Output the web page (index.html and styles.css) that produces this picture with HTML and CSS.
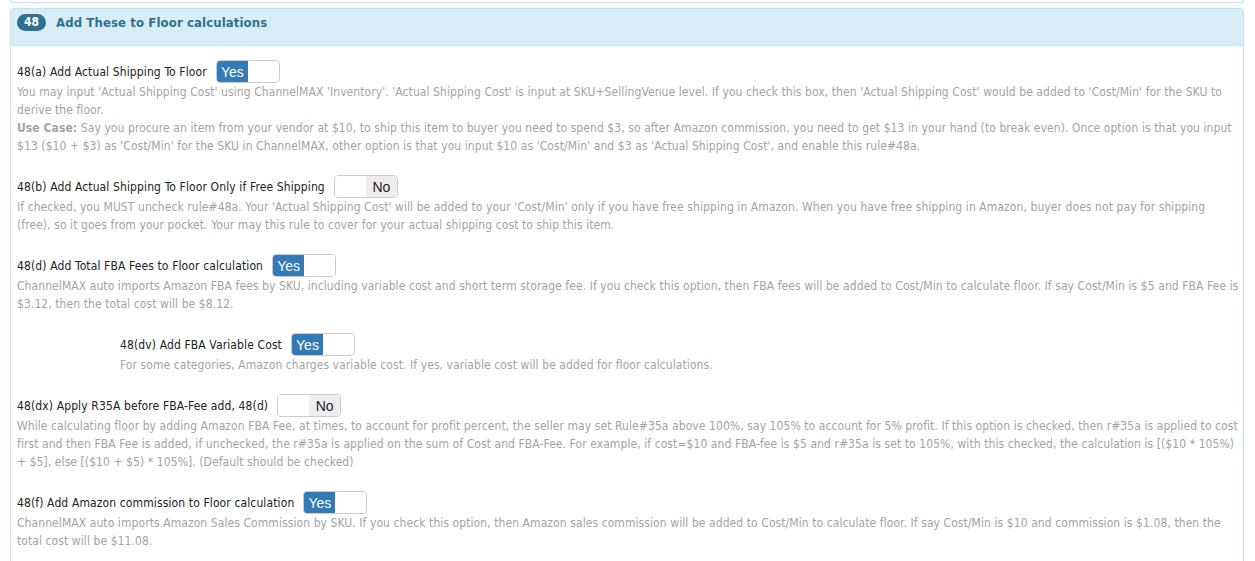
FILE: index.html
```html
<!DOCTYPE html>
<html>
<head>
<meta charset="utf-8">
<link rel="stylesheet" href="styles.css">
</head>
<body>
<div class="page">
  <div class="prev-panel"></div>
  <div class="panel">
    <div class="panel-heading">
      <span class="badge">48</span>
      <span class="panel-title">Add These to Floor calculations</span>
    </div>
    <div class="panel-body">
      <div class="rule">
        <div class="rule-head"><span class="label">48(a) Add Actual Shipping To Floor</span><span class="toggle on"><span class="t-on">Yes</span><span class="t-off"></span></span></div>
        <div class="desc">
          <p>You may input 'Actual Shipping Cost' using ChannelMAX 'Inventory'. 'Actual Shipping Cost' is input at SKU+SellingVenue level. If you check this box, then 'Actual Shipping Cost' would be added to 'Cost/Min' for the SKU to derive the floor.</p>
          <p><b>Use Case:</b> Say you procure an item from your vendor at $10, to ship this item to buyer you need to spend $3, so after Amazon commission, you need to get $13 in your hand (to break even). Once option is that you input $13 ($10 + $3) as 'Cost/Min' for the SKU in ChannelMAX, other option is that you input $10 as 'Cost/Min' and $3 as 'Actual Shipping Cost', and enable this rule#48a.</p>
        </div>
      </div>
      <div class="rule">
        <div class="rule-head"><span class="label">48(b) Add Actual Shipping To Floor Only if Free Shipping</span><span class="toggle off"><span class="t-on"></span><span class="t-off">No</span></span></div>
        <div class="desc">
          <p>If checked, you MUST uncheck rule#48a. Your 'Actual Shipping Cost' will be added to your 'Cost/Min' only if you have free shipping in Amazon. When you have free shipping in Amazon, buyer does not pay for shipping (free), so it goes from your pocket. Your may this rule to cover for your actual shipping cost to ship this item.</p>
        </div>
      </div>
      <div class="rule">
        <div class="rule-head"><span class="label">48(d) Add Total FBA Fees to Floor calculation</span><span class="toggle on"><span class="t-on">Yes</span><span class="t-off"></span></span></div>
        <div class="desc">
          <p>ChannelMAX auto imports Amazon FBA fees by SKU, including variable cost and short term storage fee. If you check this option, then FBA fees will be added to Cost/Min to calculate floor. If say Cost/Min is $5 and FBA Fee is $3.12, then the total cost will be $8.12.</p>
        </div>
      </div>
      <div class="rule sub">
        <div class="rule-head"><span class="label">48(dv) Add FBA Variable Cost</span><span class="toggle on"><span class="t-on">Yes</span><span class="t-off"></span></span></div>
        <div class="desc">
          <p>For some categories, Amazon charges variable cost. If yes, variable cost will be added for floor calculations.</p>
        </div>
      </div>
      <div class="rule">
        <div class="rule-head"><span class="label">48(dx) Apply R35A before FBA-Fee add, 48(d)</span><span class="toggle off"><span class="t-on"></span><span class="t-off">No</span></span></div>
        <div class="desc">
          <p>While calculating floor by adding Amazon FBA Fee, at times, to account for profit percent, the seller may set Rule#35a above 100%, say 105% to account for 5% profit. If this option is checked, then r#35a is applied to cost first and then FBA Fee is added, if unchecked, the r#35a is applied on the sum of Cost and FBA-Fee. For example, if cost=$10 and FBA-fee is $5 and r#35a is set to 105%, with this checked, the calculation is [($10 * 105%) + $5], else [($10 + $5) * 105%]. (Default should be checked)</p>
        </div>
      </div>
      <div class="rule">
        <div class="rule-head"><span class="label">48(f) Add Amazon commission to Floor calculation</span><span class="toggle on"><span class="t-on">Yes</span><span class="t-off"></span></span></div>
        <div class="desc">
          <p>ChannelMAX auto imports Amazon Sales Commission by SKU. If you check this option, then Amazon sales commission will be added to Cost/Min to calculate floor. If say Cost/Min is $10 and commission is $1.08, then the total cost will be $11.08.</p>
        </div>
      </div>
      <div class="rule">
        <div class="rule-head"><span class="label">48(g) Add Amazon Closing Fees into Floor</span><span class="toggle on"><span class="t-on">Yes</span><span class="t-off"></span></span></div>
      </div>
    </div>
  </div>
</div>
</body>
</html>
```

FILE: styles.css
```css
html, body {
  margin: 0;
  padding: 0;
  background: #ffffff;
}
body {
  font-family: "DejaVu Sans Condensed", "DejaVu Sans", sans-serif;
  font-size: 12px;
  letter-spacing: 0.12px;
  color: #333333;
  overflow: hidden;
}
.page {
  padding: 0 11px 0 10px;
}
.prev-panel {
  height: 2px;
  border: 1px solid #bce8f1;
  border-top: none;
  border-radius: 0 0 4px 4px;
  margin-bottom: 5px;
}
.panel {
  border: 1px solid #bce8f1;
  border-radius: 4px;
  border-bottom: none;
}
.panel-heading {
  background: #d9edf7;
  border-bottom: 1px solid #bce8f1;
  border-radius: 3px 3px 0 0;
  display: flex;
  align-items: center;
  padding: 4px 6px 14px 6px;
  height: 37px;
  box-sizing: border-box;
}
.badge {
  background: #31708f;
  color: #ffffff;
  font-weight: bold;
  font-size: 12px;
  letter-spacing: 0;
  border-radius: 9px;
  height: 17px;
  width: 29px;
  display: inline-flex;
  align-items: center;
  justify-content: center;
}
.panel-title {
  margin-left: 10px;
  color: #31708f;
  font-weight: bold;
  font-size: 13px;
}
.panel-body {
  padding: 14px 1px 0 6px;
}
.rule {
  margin-bottom: 20px;
}
.rule.sub {
  padding-left: 103px;
}
.rule-head {
  display: flex;
  align-items: center;
  height: 23px;
}
.label {
  color: #222222;
}
.toggle {
  display: inline-flex;
  margin-left: 9px;
  width: 64px;
  height: 23px;
  box-sizing: border-box;
  border: 1px solid #cccccc;
  border-radius: 4px;
  overflow: hidden;
  font-family: "Liberation Sans", Arial, sans-serif;
  font-size: 14px;
  letter-spacing: 0;
}
.t-on, .t-off {
  flex: 1;
  display: flex;
  align-items: center;
  justify-content: center;
}
.toggle.on .t-on {
  background: #337ab7;
  color: #ffffff;
  flex: 0 0 31px;
}
.toggle.on .t-off {
  background: #ffffff;
}
.toggle.off .t-on {
  background: #ffffff;
}
.toggle.off .t-off {
  background: #eeeeee;
  color: #222222;
  flex: 0 0 31px;
}
.desc {
  color: #a3a3a3;
  line-height: 18px;
  letter-spacing: 0.08px;
}
.desc p {
  margin: 0;
}
.desc b {
  font-weight: bold;
}
```
